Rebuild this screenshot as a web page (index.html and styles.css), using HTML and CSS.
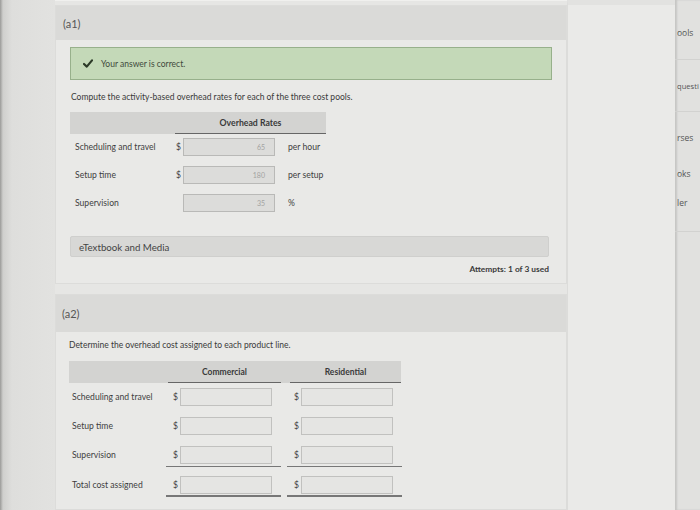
FILE: index.html
```html
<!DOCTYPE html>
<html>
<head>
<meta charset="utf-8">
<link rel="stylesheet" href="styles.css">
</head>
<body>
<div class="screen">
  <div class="left-strip"></div>
  <div class="main">
    <section class="card card-a1">
      <div class="card-head">(a1)</div>
      <div class="card-body">
        <div class="alert">
          <svg class="check" width="10" height="9" viewBox="0 0 10 9"><path d="M1 5 L3.8 7.6 L9 1.4" fill="none" stroke="#2c3a28" stroke-width="2.2" stroke-linecap="round" stroke-linejoin="round"/></svg>
          <span>Your answer is correct.</span>
        </div>
        <p class="instr">Compute the activity-based overhead rates for each of the three cost pools.</p>
        <div class="thead thead-a1">
          <div class="th-label"></div>
          <div class="th-col th-rates">Overhead Rates</div>
        </div>
        <div class="row row-a1 r1">
          <span class="lbl">Scheduling and travel</span>
          <span class="cur">$</span>
          <span class="inp filled">65</span>
          <span class="unit">per hour</span>
        </div>
        <div class="row row-a1 r2">
          <span class="lbl">Setup time</span>
          <span class="cur">$</span>
          <span class="inp filled">180</span>
          <span class="unit">per setup</span>
        </div>
        <div class="row row-a1 r3">
          <span class="lbl">Supervision</span>
          <span class="cur"></span>
          <span class="inp filled">35</span>
          <span class="unit">%</span>
        </div>
        <div class="media">eTextbook and Media</div>
        <div class="attempts">Attempts: 1 of 3 used</div>
      </div>
    </section>
    <section class="card card-a2">
      <div class="card-head">(a2)</div>
      <div class="card-body body-a2">
        <p class="instr instr-a2">Determine the overhead cost assigned to each product line.</p>
        <div class="thead thead-a2">
          <div class="th-label2"></div>
          <div class="th-col th-com">Commercial</div>
          <div class="th-col th-res">Residential</div>
        </div>
        <div class="row row-a2 q1">
          <span class="lbl2">Scheduling and travel</span>
          <span class="cell"><span class="cur2">$</span><span class="inp2"></span></span>
          <span class="cell"><span class="cur2">$</span><span class="inp2"></span></span>
        </div>
        <div class="row row-a2 q2">
          <span class="lbl2">Setup time</span>
          <span class="cell"><span class="cur2">$</span><span class="inp2"></span></span>
          <span class="cell"><span class="cur2">$</span><span class="inp2"></span></span>
        </div>
        <div class="row row-a2 q3">
          <span class="lbl2">Supervision</span>
          <span class="cell"><span class="cur2">$</span><span class="inp2"></span></span>
          <span class="cell"><span class="cur2">$</span><span class="inp2"></span></span>
        </div>
        <div class="row row-a2 q4 total">
          <span class="lbl2">Total cost assigned</span>
          <span class="cell"><span class="cur2">$</span><span class="inp2"></span></span>
          <span class="cell"><span class="cur2">$</span><span class="inp2"></span></span>
        </div>
      </div>
    </section>
  </div>
  <div class="side-panel"></div>
  <nav class="nav">
    <div class="nav-item n1">ools</div>
    <div class="nav-item n2">questi</div>
    <div class="nav-item n3">rses</div>
    <div class="nav-item n4">oks</div>
    <div class="nav-item n5">ler</div>
  </nav>
</div>
</body>
</html>
```

FILE: styles.css
```css
* { box-sizing: border-box; }
html, body { margin: 0; padding: 0; }
body {
  width: 700px;
  height: 510px;
  overflow: hidden;
  background: #e3e3e1;
  font-family: Lato, "Open Sans", "Liberation Sans", sans-serif;
  color: #3d3d3d;
}
.screen {
  display: flex;
  height: 510px;
}
.left-strip {
  width: 55px;
  flex: none;
  background: linear-gradient(to right, #9a9a98 0px, #cfcfcd 3px, #dededc 12px, #e2e2e0 55px);
}
.main {
  width: 512px;
  flex: none;
  display: flex;
  flex-direction: column;
  gap: 10px;
  padding-top: 4px;
  background: #e6e6e4;
  border-top: 1px solid #f0f0ee;
}
.card {
  background: #e9e9e7;
  border: 1px solid #dcdcda;
}
.card-head {
  background: #dadad8;
  height: 34px;
  padding: 0 0 0 7px;
  display: flex;
  align-items: center;
  font-size: 11px;
  color: #555;
}
.card-a2 .card-head {
  height: 37px;
  padding-left: 6px;
}
.card-a2 { flex: 1; }
.card-body {
  padding: 7px 14px 8px 14px;
}
.alert {
  height: 33px;
  width: 482px;
  background: #c4d9b8;
  border: 1px solid #97b08b;
  display: flex;
  align-items: center;
  padding-left: 12px;
  font-size: 8.5px;
  color: #3f4a3c;
}
.check { margin-right: 8px; }
.instr {
  margin: 11px 0 0 1px;
  font-size: 8.5px;
  line-height: 12px;
  color: #3a3a3a;
}
.thead {
  display: flex;
  background: #d3d3d1;
  height: 22px;
  font-size: 8.7px;
  font-weight: 700;
  color: #3a3a3a;
}
.thead-a1 { margin-top: 9px; width: 256px; }
.th-label { width: 105px; }
.th-col {
  display: flex;
  align-items: center;
  justify-content: center;
  border-bottom: 1px solid #666;
}
.th-rates { width: 151px; }
.row {
  display: flex;
  align-items: center;
  font-size: 8.6px;
  color: #3e3e3e;
}
.row-a1 { height: 18px; }
.r1 { margin-top: 4px; }
.r2 { margin-top: 10px; }
.r3 { margin-top: 10px; }
.lbl { width: 105px; padding-left: 5px; white-space: nowrap; }
.cur { width: 8px; padding-left: 1px; }
.inp {
  width: 92px;
  height: 18px;
  border: 1px solid #b9b9b7;
  background: #dcdcda;
  display: flex;
  align-items: center;
  justify-content: flex-end;
  padding-right: 9px;
  font-size: 7px;
  color: #a3a3a1;
}
.unit { margin-left: 13px; }
.media {
  margin-top: 24px;
  width: 479px;
  height: 21px;
  background: #d8d8d6;
  border: 1px solid #cfcfcd;
  border-radius: 2px;
  display: flex;
  align-items: center;
  padding-left: 8px;
  font-size: 9.7px;
  color: #444;
}
.attempts {
  width: 479px;
  margin-top: 6px;
  text-align: right;
  font-size: 8.4px;
  line-height: 12px;
  font-weight: 700;
  color: #3a3a3a;
}
.body-a2 { padding: 7px 14px 0 13px; }
.instr-a2 { margin-top: 0; margin-left: 0; }
.thead-a2 { margin-top: 10px; width: 332px; font-size: 8.5px; }
.th-label2 { width: 99px; }
.th-com { width: 113px; }
.th-res { width: 111px; margin-left: 9px; }
.row-a2 { height: 18px; }
.q1 { margin-top: 5px; }
.q2 { margin-top: 11px; }
.q3 { margin-top: 11px; }
.q4 { margin-top: 12px; }
.lbl2 { width: 99px; padding-left: 3px; white-space: nowrap; }
.cell {
  display: flex;
  align-items: center;
  width: 113px;
  height: 18px;
  position: relative;
}
.cell + .cell { margin-left: 8px; }
.cur2 { width: 12px; padding-left: 5px; }
.inp2 {
  width: 92px;
  height: 18px;
  border: 1px solid #c1c1bf;
  background: #e5e5e3;
}
.q3 .cell::after,
.total .cell::after {
  content: "";
  position: absolute;
  left: -2px;
  right: 0;
  height: 1px;
  background: #777;
}
.q3 .cell::after { bottom: -3px; }
.total .cell::after { bottom: -3px; height: 2px; background: #777; }
.side-panel {
  width: 108px;
  flex: none;
  background: #eaeae8;
  border-left: 1px solid #dcdcda;
  border-top: 5px solid #e2e2e0;
}
.nav {
  width: 25px;
  flex: none;
  background: #e1e1df;
  box-shadow: inset 2px 0 2px rgba(0,0,0,0.12);
  display: flex;
  flex-direction: column;
  font-family: "Open Sans", Lato, sans-serif;
  font-size: 7.6px;
  color: #555;
}
.nav-item {
  padding-left: 2px;
  display: flex;
  align-items: center;
  white-space: nowrap;
}
.n1 { height: 60px; border-bottom: 1px solid #d2d2d0; padding-top: 6px; font-size: 8.5px; }
.n2 { height: 52px; border-bottom: 1px solid #d2d2d0; }
.n3 { height: 46px; padding-top: 4px; font-size: 8.5px; }
.n4 { height: 30px; font-size: 8.5px; }
.n5 { height: 44px; border-bottom: 1px solid #d2d2d0; padding-bottom: 14px; font-size: 8.5px; }
```
